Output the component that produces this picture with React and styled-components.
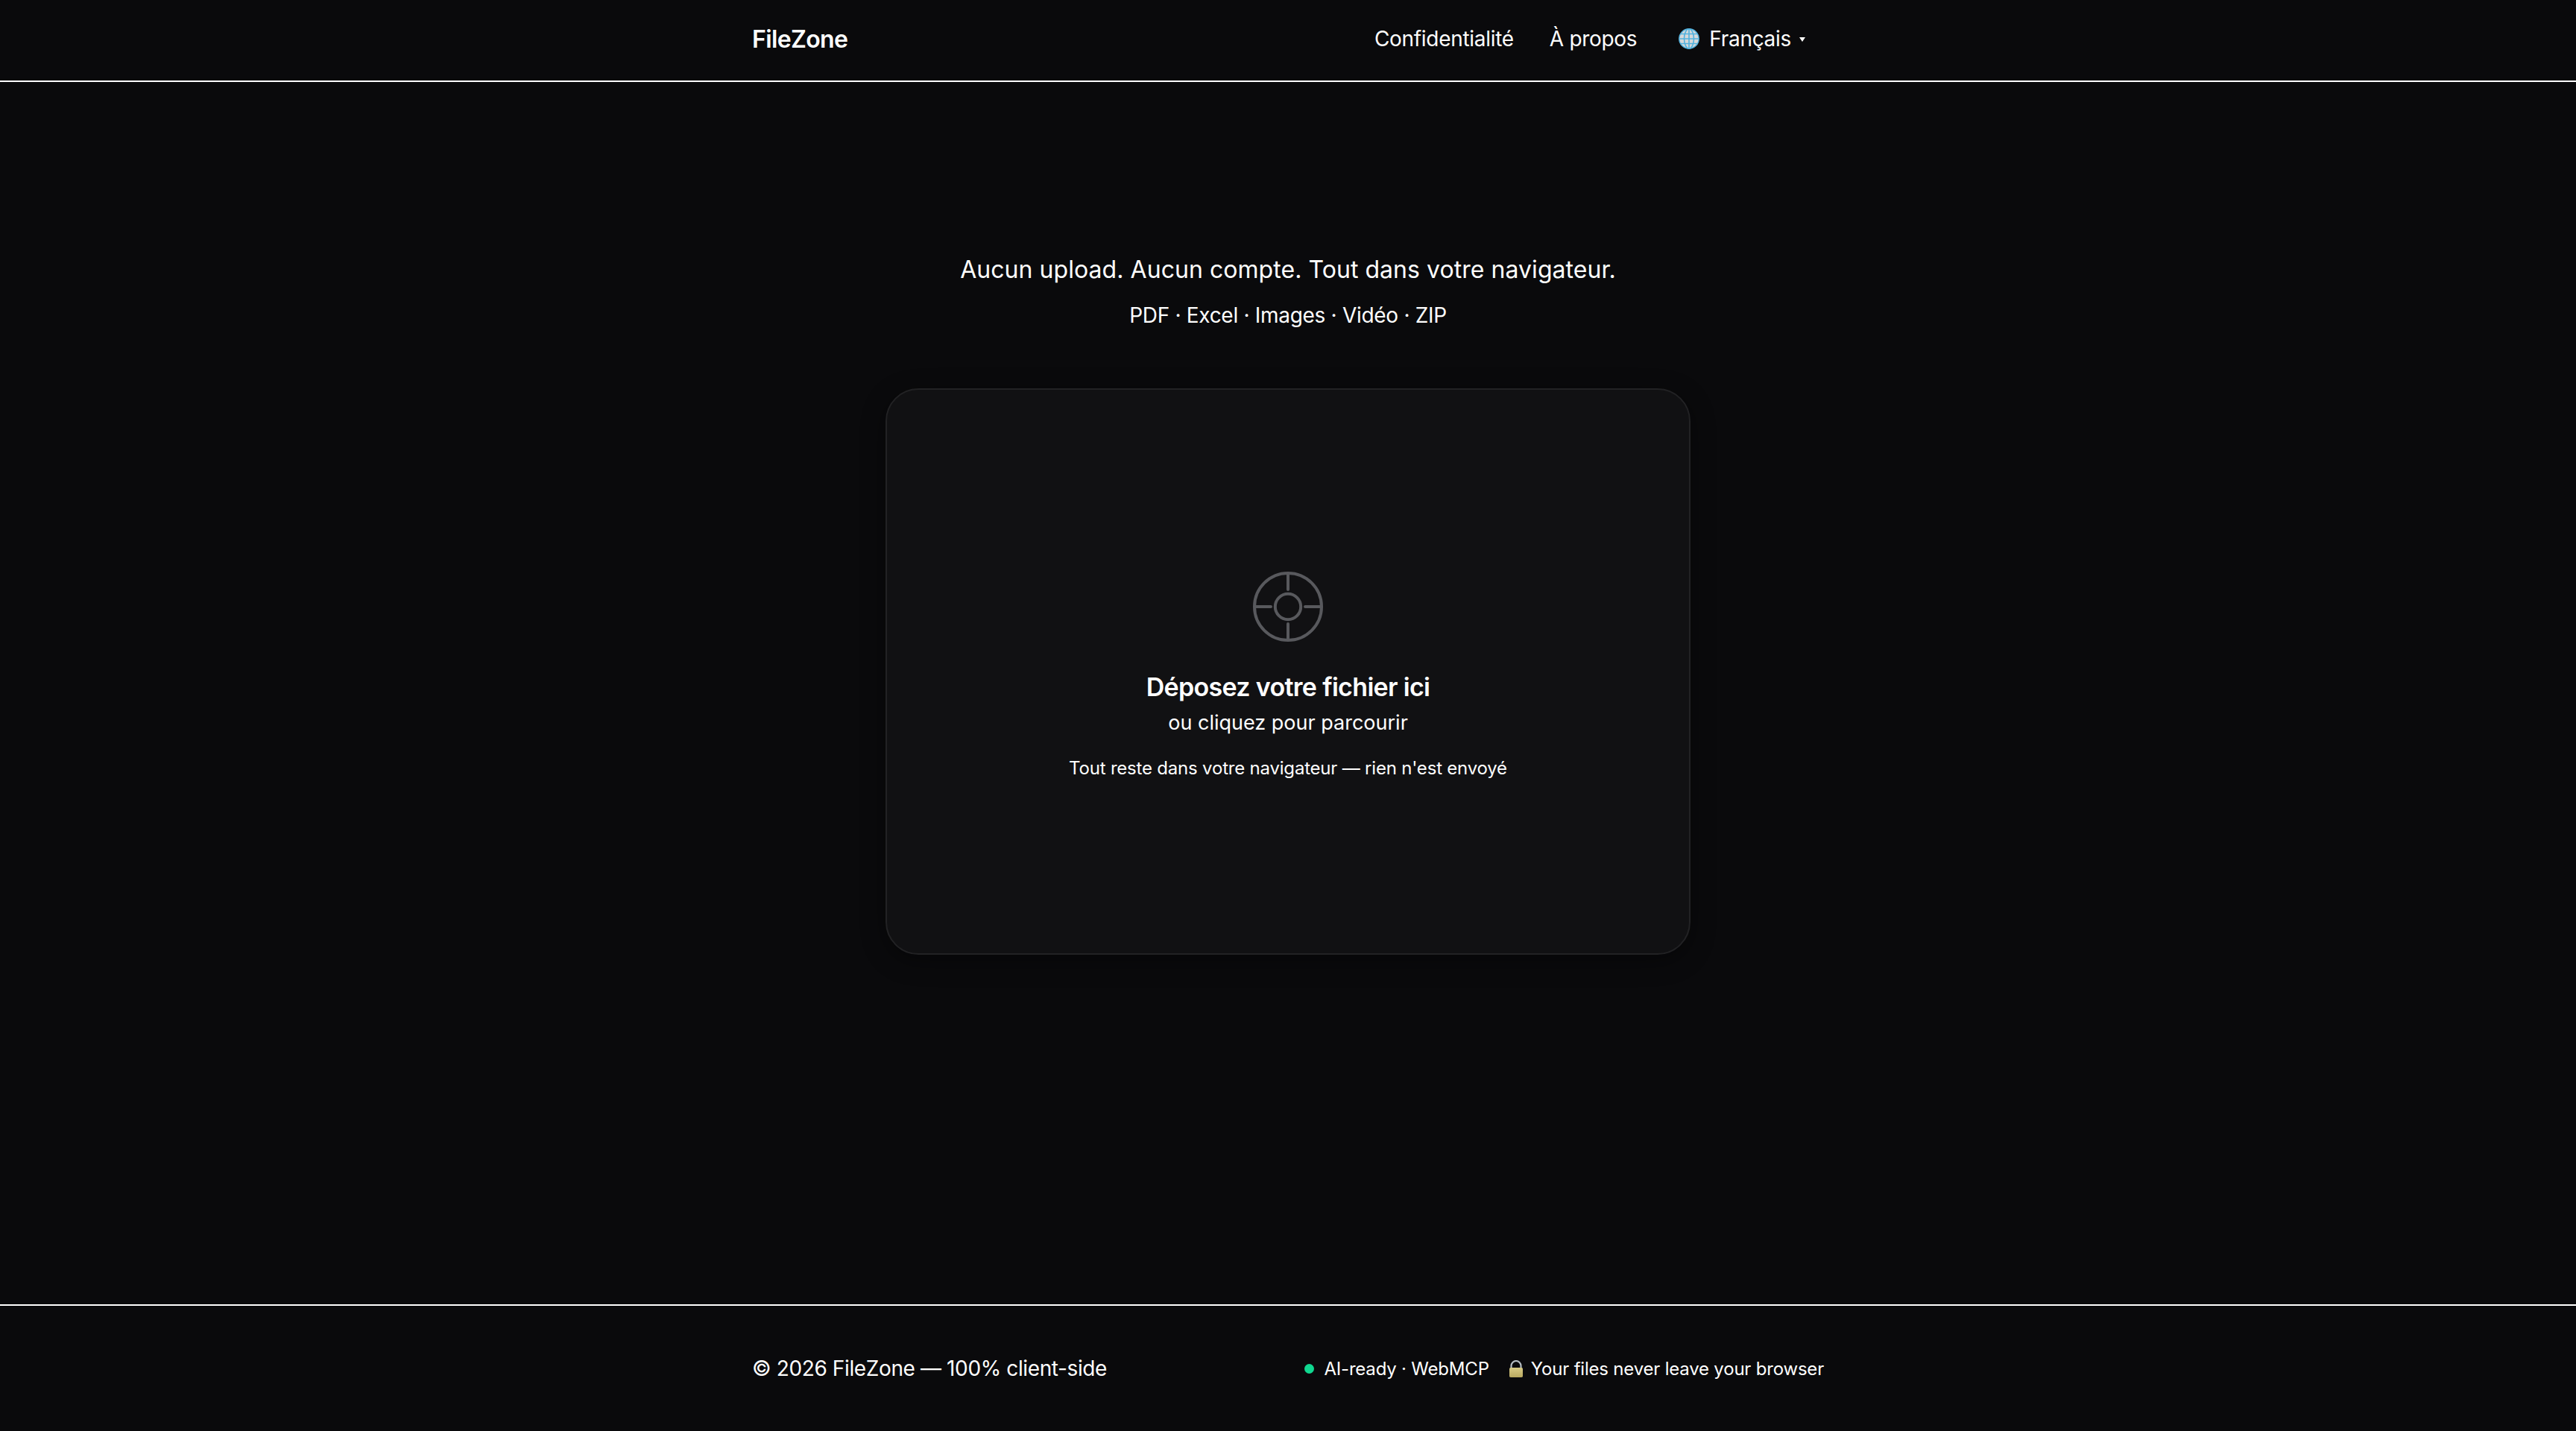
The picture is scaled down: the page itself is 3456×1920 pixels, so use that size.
import React from 'react';
import styled, { createGlobalStyle } from 'styled-components';

const GlobalStyle = createGlobalStyle`
  html, body {
    margin: 0;
    padding: 0;
    background: #0a0a0c;
  }
  * {
    box-sizing: border-box;
  }
`;

const Page = styled.div`
  display: flex;
  flex-direction: column;
  height: 1920px;
  background: #0a0a0c;
  color: #fff;
  font-family: Inter, "Liberation Sans", sans-serif;
`;

const Header = styled.header`
  display: flex;
  justify-content: center;
  height: 110px;
  border-bottom: 2px solid #fff;
`;

const HeaderInner = styled.div`
  display: flex;
  align-items: center;
  justify-content: space-between;
  width: 1440px;
  padding: 0 26px 4px 1px;
`;

const Logo = styled.a`
  font-size: 32px;
  font-weight: 600;
  letter-spacing: -0.64px;
`;

const Nav = styled.nav`
  display: flex;
  align-items: center;
  gap: 48px;
  font-size: 28px;
  letter-spacing: -0.3px;
`;

const Lang = styled.div`
  display: flex;
  align-items: center;
  gap: 13px;
  margin-left: 8px;
`;

const Caret = styled.span`
  width: 0;
  height: 0;
  margin-left: -2px;
  margin-top: 2px;
  border-left: 4px solid transparent;
  border-right: 4px solid transparent;
  border-top: 6px solid #fff;
`;

const Main = styled.main`
  flex: 1;
  display: flex;
  flex-direction: column;
  align-items: center;
  padding-top: 229px;
`;

const Tagline = styled.p`
  margin: 0;
  font-size: 32px;
  line-height: 46px;
  letter-spacing: 0.05px;
`;

const Formats = styled.p`
  margin: 15px 0 0;
  font-size: 28px;
  line-height: 46px;
  letter-spacing: -0.3px;
`;

const DropZone = styled.div`
  display: flex;
  flex-direction: column;
  align-items: center;
  justify-content: center;
  width: 1080px;
  height: 760px;
  margin-top: 75px;
  padding-top: 13px;
  background: #111113;
  border: 2px solid #222224;
  border-radius: 44px;
  box-shadow: 0 8px 32px rgba(0, 0, 0, 0.4);
`;

const ZoneIcon = styled.svg`
  width: 96px;
  height: 96px;
  margin-bottom: 36px;
`;

const ZoneTitle = styled.h2`
  margin: 0;
  font-size: 34px;
  font-weight: 600;
  line-height: 48px;
  letter-spacing: -0.68px;
`;

const ZoneSub = styled.p`
  margin: 2px 0 0;
  font-size: 27px;
  line-height: 44px;
`;

const ZoneHint = styled.p`
  margin: 21px 0 0;
  font-size: 24px;
  line-height: 36px;
  letter-spacing: -0.2px;
`;

const Footer = styled.footer`
  display: flex;
  justify-content: center;
  height: 170px;
  border-top: 2px solid #fff;
`;

const FooterInner = styled.div`
  display: flex;
  align-items: center;
  justify-content: space-between;
  width: 1440px;
  padding: 0 1px;
`;

const Copy = styled.span`
  font-size: 28px;
  letter-spacing: -0.38px;
`;

const Badges = styled.div`
  display: flex;
  align-items: center;
  gap: 26px;
  font-size: 24px;
  letter-spacing: -0.2px;
`;

const Badge = styled.span`
  display: flex;
  align-items: center;
  gap: ${p => p.$gap}px;
`;

const Dot = styled.span`
  width: 13px;
  height: 13px;
  border-radius: 50%;
  background: #10d890;
`;

const Globe = () => (
  <svg width="28" height="28" viewBox="0 0 28 28">
    <circle cx="14" cy="14" r="13.2" fill="#d6d8da" stroke="#52b2de" strokeWidth="1.4" />
    <g fill="none" stroke="#52b2de" strokeWidth="1.6">
      <ellipse cx="14" cy="14" rx="6.5" ry="13.2" />
      <path d="M14 .8v26.4M.8 14h26.4M2.8 7.5h22.4M2.8 20.5h22.4" />
    </g>
  </svg>
);

const Lock = () => (
  <svg width="20" height="23" viewBox="0 0 20 23">
    <defs>
      <linearGradient id="lockBody" x1="0" y1="0" x2="0" y2="1">
        <stop offset="0" stopColor="#d8cb86" />
        <stop offset="1" stopColor="#b8a860" />
      </linearGradient>
    </defs>
    <path d="M3.5 11V7.5a6.5 6.5 0 0 1 13 0V11" fill="none" stroke="#b4bcc2" strokeWidth="2.2" />
    <rect x="1" y="10" width="18" height="13" rx="1.8" fill="url(#lockBody)" />
  </svg>
);

export default function App() {
  return (
    <Page>
      <GlobalStyle />
      <Header>
        <HeaderInner>
          <Logo>FileZone</Logo>
          <Nav>
            <span>Confidentialité</span>
            <span>À propos</span>
            <Lang>
              <Globe />
              <span>Français</span>
              <Caret />
            </Lang>
          </Nav>
        </HeaderInner>
      </Header>
      <Main>
        <Tagline>Aucun upload. Aucun compte. Tout dans votre navigateur.</Tagline>
        <Formats>PDF · Excel · Images · Vidéo · ZIP</Formats>
        <DropZone>
          <ZoneIcon viewBox="0 0 48 48" fill="none" stroke="#58595d" strokeWidth="2" strokeLinecap="round">
            <circle cx="24" cy="24" r="22.5" />
            <circle cx="24" cy="24" r="8.6" />
            <path d="M24 2v10.5M24 35.5v10.5M2 24h10.5M35.5 24h10.5" />
          </ZoneIcon>
          <ZoneTitle>Déposez votre fichier ici</ZoneTitle>
          <ZoneSub>ou cliquez pour parcourir</ZoneSub>
          <ZoneHint>Tout reste dans votre navigateur — rien n'est envoyé</ZoneHint>
        </DropZone>
      </Main>
      <Footer>
        <FooterInner>
          <Copy>© 2026 FileZone — 100% client-side</Copy>
          <Badges>
            <Badge $gap={13}><Dot />AI-ready · WebMCP</Badge>
            <Badge $gap={10}><Lock />Your files never leave your browser</Badge>
          </Badges>
        </FooterInner>
      </Footer>
    </Page>
  );
}
